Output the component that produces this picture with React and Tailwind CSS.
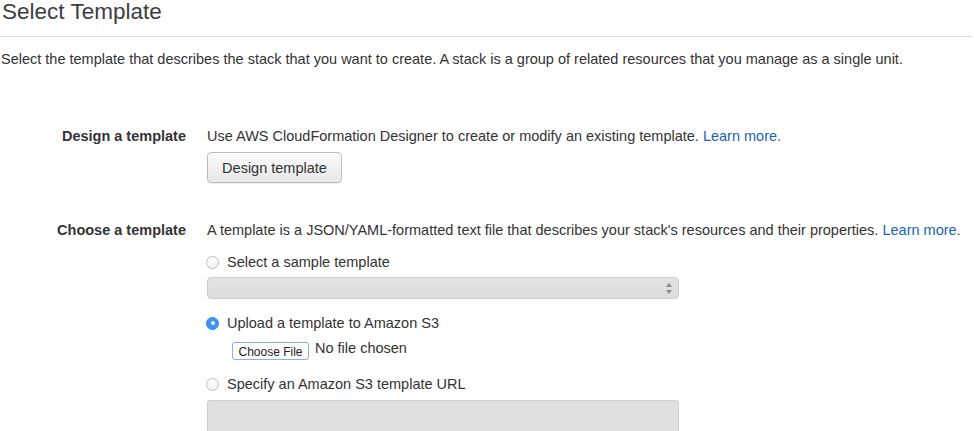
import React from "react";

function Radio({ checked }) {
  if (checked) {
    return (
      <span className="flex h-[13px] w-[13px] shrink-0 items-center justify-center rounded-full bg-[#3b94f6] border border-[#2f86e8]">
        <span className="h-[4px] w-[4px] rounded-full bg-white" />
      </span>
    );
  }
  return (
    <span className="h-[13px] w-[13px] shrink-0 rounded-full border border-[#bdbdbd] bg-gradient-to-b from-white to-[#f2f2f2]" />
  );
}

function RadioRow({ checked, label }) {
  return (
    <div className="flex h-[20px] items-center gap-[8px]">
      <span className="-ml-[1px] flex">
        <Radio checked={checked} />
      </span>
      <span className="leading-[20px]">{label}</span>
    </div>
  );
}

export default function App() {
  return (
    <div
      className="h-[431px] w-[974px] overflow-hidden bg-white text-[#333333]"
      style={{ fontFamily: '"Liberation Sans", Arial, Helvetica, sans-serif' }}
    >
      <div className="w-[972px] border-b border-[#dcdcdc] pb-[12px]">
        <h1 className="pl-[2px] text-[22.5px] leading-[24px] text-[#3d3d3d]">Select Template</h1>
      </div>
      <p className="mt-[12px] pl-[1px] text-[14.5px] leading-[20px]">
        Select the template that describes the stack that you want to create. A stack is a group of related resources that you manage as a single unit.
      </p>

      <div className="mt-[57px] grid grid-cols-[186px_1fr] gap-x-[21px] text-[14.5px] leading-[20px]">
        <div className="whitespace-nowrap text-right font-bold text-[#333]">Design a template</div>
        <div className="flex flex-col items-start">
          <div className="whitespace-nowrap">
            Use AWS CloudFormation Designer to create or modify an existing template.{" "}
            <span className="text-[#1a64b8]">Learn more.</span>
          </div>
          <button className="mt-[6px] h-[31px] w-[135px] rounded-[4px] border border-[#bdbdbd] bg-gradient-to-b from-[#fbfbfb] to-[#e7e7e7] text-[14.5px] text-[#333] shadow-[0_1px_1px_rgba(0,0,0,0.08)]">
            Design template
          </button>
        </div>

        <div className="mt-[37px] whitespace-nowrap text-right font-bold text-[#333]">Choose a template</div>
        <div className="mt-[37px] flex flex-col items-start">
          <div className="whitespace-nowrap">
            A template is a JSON/YAML-formatted text file that describes your stack's resources and their properties.{" "}
            <span className="text-[#1a64b8]">Learn more.</span>
          </div>

          <div className="mt-[12px]">
            <RadioRow label="Select a sample template" />
          </div>
          <div className="relative mt-[5px] h-[22px] w-[472px] rounded-[4px] border border-[#cfcfcf] bg-gradient-to-b from-[#e4e4e4] to-[#dcdcdc]">
            <svg className="absolute right-[5px] top-[4px]" width="8" height="13" viewBox="0 0 8 13">
              <path d="M4 1 L7 5 L1 5 Z" fill="#8a8a8a" />
              <path d="M4 12 L7 8 L1 8 Z" fill="#8a8a8a" />
            </svg>
          </div>

          <div className="mt-[14px]">
            <RadioRow checked label="Upload a template to Amazon S3" />
          </div>
          <div className="ml-[25px] mt-[9px] flex h-[18px] items-start gap-[6px]">
            <button className="h-[18px] w-[77px] rounded-[3px] border border-[#7fb2ec] bg-white pt-[1px] text-[12px] leading-[14px] text-[#222]">
              Choose File
            </button>
            <span className="-translate-y-[3px] whitespace-nowrap text-[14.5px] leading-[18px] text-[#333]">No file chosen</span>
          </div>

          <div className="mt-[14px]">
            <RadioRow label="Specify an Amazon S3 template URL" />
          </div>
          <div className="mt-[6px] h-[34px] w-[472px] rounded-[3px] border border-[#cfcfcf] bg-[#e0e0e0]" />
        </div>
      </div>
    </div>
  );
}
